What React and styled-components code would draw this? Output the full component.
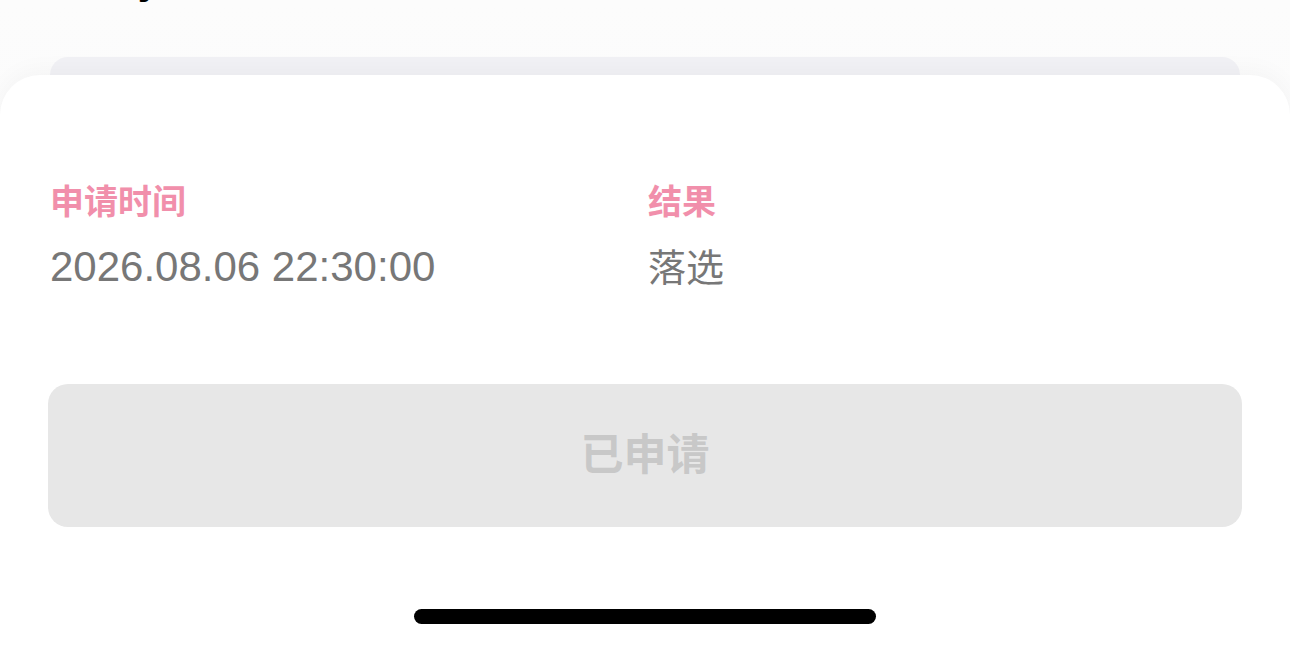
import React from "react";
import styled, { createGlobalStyle } from "styled-components";

const Global = createGlobalStyle`
  html, body { margin: 0; padding: 0; background: #fafafa; }
  body { font-family: "Noto Sans CJK SC", "Noto Sans", sans-serif; }
  #root { min-height: 100vh; }
`;

const Page = styled.div`
  width: 1290px;
  height: 648px;
  overflow: hidden;
  display: flex;
  flex-direction: column;
  background: linear-gradient(180deg, #fcfcfc 0%, #f9f9fa 100%);
`;

const Header = styled.div`
  height: 57px;
  overflow: hidden;
  padding-left: 60px;
`;

const Title = styled.div`
  margin-top: -40px;
  font-family: "Liberation Sans", sans-serif;
  font-weight: 700;
  font-size: 40px;
  line-height: 1;
  color: #000;
`;

const BehindCard = styled.div`
  height: 18px;
  margin: 0 50px;
  background: #f1f1f5;
  border-radius: 20px 20px 0 0;
`;

const Sheet = styled.div`
  flex: 1;
  display: flex;
  flex-direction: column;
  background: #fff;
  border-radius: 40px 40px 0 0;
  box-shadow: 0 -4px 24px rgba(0, 0, 0, 0.035);
  padding: 108px 48px 0 50px;
`;

const InfoGrid = styled.div`
  display: grid;
  grid-template-columns: 598px 1fr;
`;

const Field = styled.div`
  display: flex;
  flex-direction: column;
  gap: 29px;
`;

const Label = styled.div`
  font-size: 34px;
  line-height: 1;
  font-weight: 600;
  color: #f18fab;
`;

const Value = styled.div`
  font-family: ${(p) => (p.$latin ? '"Liberation Sans", "Noto Sans CJK SC", sans-serif' : '"Noto Sans CJK SC", sans-serif')};
  font-size: ${(p) => (p.$latin ? "42px" : "38px")};
  line-height: ${(p) => (p.$latin ? "42px" : "38px")};
  color: #777777;
`;

const Button = styled.button`
  margin: 96px 0 0 -2px;
  height: 143px;
  border: none;
  border-radius: 20px;
  background: #e7e7e7;
  color: #c8c8c8;
  font-family: "Noto Sans CJK SC", sans-serif;
  font-size: 43px;
  font-weight: 700;
  display: flex;
  align-items: center;
  justify-content: center;
  padding: 0 0 9px;
`;

const HomeBar = styled.div`
  align-self: center;
  margin: 82px 0 0 -2px;
  width: 462px;
  height: 15px;
  border-radius: 8px;
  background: #000;
`;

export default function App() {
  return (
    <>
      <Global />
      <Page>
        <Header>
          <Title>Party</Title>
        </Header>
        <BehindCard />
        <Sheet>
          <InfoGrid>
            <Field>
              <Label>申请时间</Label>
              <Value $latin>2026.08.06 22:30:00</Value>
            </Field>
            <Field>
              <Label>结果</Label>
              <Value>落选</Value>
            </Field>
          </InfoGrid>
          <Button disabled>已申请</Button>
          <HomeBar />
        </Sheet>
      </Page>
    </>
  );
}
